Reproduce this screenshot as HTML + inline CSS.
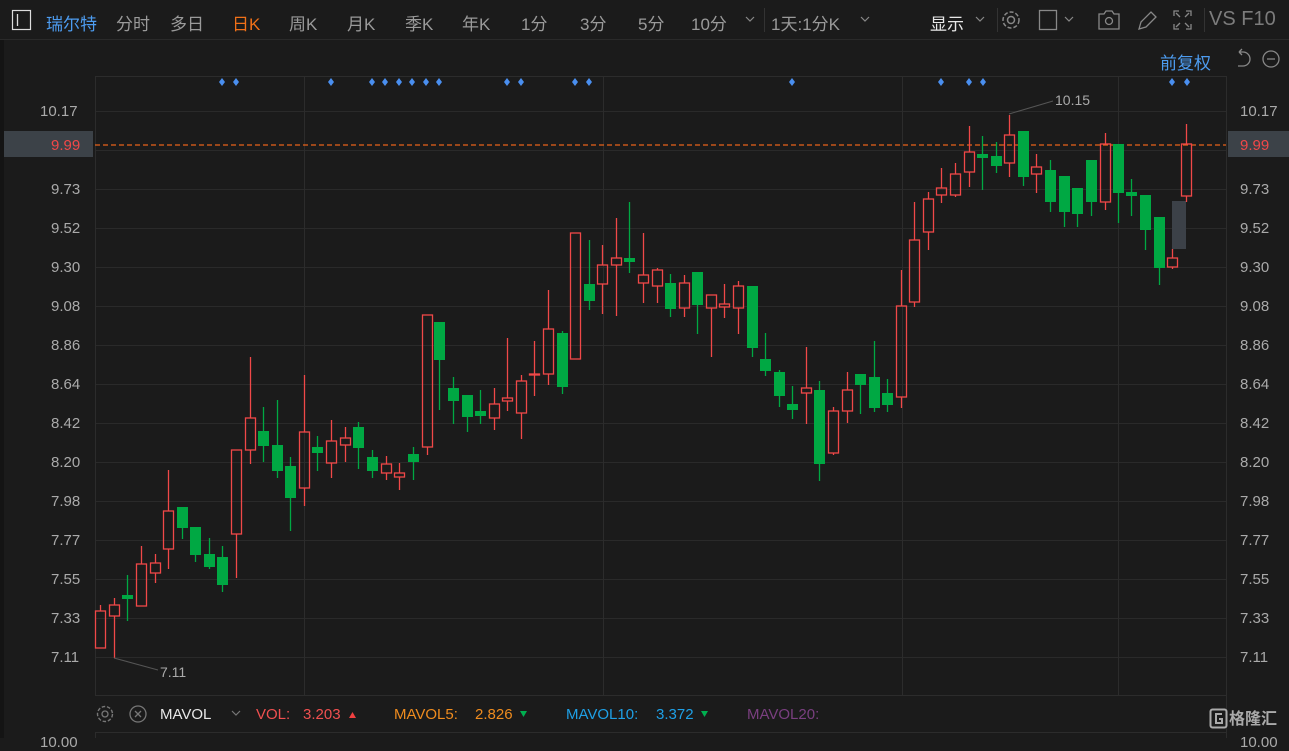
<!DOCTYPE html>
<html><head><meta charset="utf-8">
<style>
html,body{margin:0;padding:0;background:#1b1b1b;width:1289px;height:738px;overflow:hidden;font-family:"Liberation Sans","Noto Sans CJK SC",sans-serif;}
.t{position:absolute;white-space:nowrap;}
.l{font-size:15px;color:#aaa;}
</style></head><body>
<svg id="s" width="1289" height="738" style="position:absolute;left:0;top:0" xmlns="http://www.w3.org/2000/svg">
<rect x="0" y="0" width="1289" height="738" fill="#1b1b1b"/>
<rect x="0" y="40" width="4" height="698" fill="#141414"/>
<line x1="0" y1="39.5" x2="1289" y2="39.5" stroke="#2a2a2a"/>
<g id="grid" stroke="#2a2a2a" stroke-width="1"></g>
<line x1="95.5" y1="76" x2="95.5" y2="695" stroke="#2c2c2c"/>
<line x1="1226.5" y1="76" x2="1226.5" y2="738" stroke="#2c2c2c"/>
<line x1="95" y1="76.5" x2="1226" y2="76.5" stroke="#2c2c2c"/>
<line x1="95" y1="695.5" x2="1226" y2="695.5" stroke="#2c2c2c"/>
<line x1="95" y1="732.5" x2="1226" y2="732.5" stroke="#2c2c2c"/>
<line x1="95.5" y1="732" x2="95.5" y2="738" stroke="#2c2c2c"/>
<g stroke="#2c2c2c"><line x1="304.5" y1="76" x2="304.5" y2="695"/><line x1="603.5" y1="76" x2="603.5" y2="695"/><line x1="902.5" y1="76" x2="902.5" y2="695"/><line x1="1118.5" y1="76" x2="1118.5" y2="695"/></g>
<line x1="764.5" y1="8" x2="764.5" y2="32" stroke="#333"/>
<line x1="997.5" y1="8" x2="997.5" y2="32" stroke="#333"/>
<line x1="1204.5" y1="8" x2="1204.5" y2="32" stroke="#333"/>
<rect x="4" y="131" width="89" height="26" fill="#3c4248"/>
<rect x="1228" y="131" width="61" height="26" fill="#3c4248"/>
<line x1="95" y1="145" x2="1226" y2="145" stroke="#e8621a" stroke-width="1.2" stroke-dasharray="5,3"/>
<g id="c"></g>
<g id="d" fill="#4a8ff0"></g>
<line x1="114" y1="658" x2="158" y2="670" stroke="#555" stroke-width="1"/>
<line x1="1009" y1="114" x2="1053" y2="101" stroke="#555" stroke-width="1"/>
<rect x="12.5" y="10.5" width="18" height="19" fill="none" stroke="#ddd" stroke-width="1.2"/>
<line x1="17.5" y1="14" x2="17.5" y2="26" stroke="#ddd" stroke-width="1.3"/>
<path d="M746 17l4 4 4-4" fill="none" stroke="#888" stroke-width="1.2"/>
<path d="M861 17l4 4 4-4" fill="none" stroke="#888" stroke-width="1.2"/>
<path d="M976 17l4 4 4-4" fill="none" stroke="#888" stroke-width="1.2"/>
<circle cx="1011" cy="20" r="8" fill="none" stroke="#888" stroke-width="1.5" stroke-dasharray="4,2"/>
<circle cx="1011" cy="20" r="3.5" fill="none" stroke="#888" stroke-width="1.5"/>
<rect x="1039.5" y="10.5" width="17" height="19" fill="none" stroke="#888" stroke-width="1.3"/>
<path d="M1065 17l4 4 4-4" fill="none" stroke="#888" stroke-width="1.2"/>
<path d="M1099 14h5l2-3h6l2 3h5v15h-20z" fill="none" stroke="#888" stroke-width="1.3"/>
<circle cx="1109" cy="21" r="3.5" fill="none" stroke="#888" stroke-width="1.3"/>
<path d="M1139 29l2-7 10-10 5 5-10 10z" fill="none" stroke="#888" stroke-width="1.3"/>
<path d="M1174 16v-5h5M1191 16v-5h-5M1174 24v5h5M1191 24v5h-5M1176 13l4 4M1189 13l-4 4M1176 27l4-4M1189 27l-4-4" fill="none" stroke="#888" stroke-width="1.3"/>
<path d="M1239 52h4a7 7 0 0 1 0 14h-5M1239 52l3-3M1239 52l3 3" fill="none" stroke="#888" stroke-width="1.3"/>
<circle cx="1271" cy="59" r="8" fill="none" stroke="#888" stroke-width="1.3"/>
<line x1="1267" y1="59" x2="1275" y2="59" stroke="#888" stroke-width="1.3"/>
<circle cx="105" cy="714" r="7.5" fill="none" stroke="#777" stroke-width="1.4" stroke-dasharray="3.5,1.8"/>
<circle cx="105" cy="714" r="3" fill="none" stroke="#777" stroke-width="1.3"/>
<circle cx="138" cy="714" r="8" fill="none" stroke="#777" stroke-width="1.3"/>
<path d="M135 711l6 6M141 711l-6 6" stroke="#777" stroke-width="1.3"/>
<path d="M232 711l4 4 4-4" fill="none" stroke="#777" stroke-width="1.2"/>
<path d="M349 718l3.5-6 3.5 6z" fill="#f04040"/>
<path d="M520 711h7l-3.5 6z" fill="#00b050"/>
<path d="M701 711h7l-3.5 6z" fill="#00b050"/>
<rect x="1210.5" y="709.5" width="16" height="18" rx="2" fill="none" stroke="#aaa" stroke-width="2"/>
<path d="M1222 714h-6v9h6v-4h-3" fill="none" stroke="#aaa" stroke-width="2"/>
</svg>
<div class="t" style="left:46px;top:10px;font-size:17px;color:#4d9cf0">瑞尔特</div>
<div class="t" style="left:116px;top:10px;font-size:17px;color:#9a9a9a">分时</div>
<div class="t" style="left:170px;top:10px;font-size:17px;color:#9a9a9a">多日</div>
<div class="t" style="left:232px;top:10px;font-size:17px;color:#f07018">日K</div>
<div class="t" style="left:289px;top:10px;font-size:17px;color:#9a9a9a">周K</div>
<div class="t" style="left:347px;top:10px;font-size:17px;color:#9a9a9a">月K</div>
<div class="t" style="left:405px;top:10px;font-size:17px;color:#9a9a9a">季K</div>
<div class="t" style="left:462px;top:10px;font-size:17px;color:#9a9a9a">年K</div>
<div class="t" style="left:521px;top:10px;font-size:17px;color:#9a9a9a">1分</div>
<div class="t" style="left:580px;top:10px;font-size:17px;color:#9a9a9a">3分</div>
<div class="t" style="left:638px;top:10px;font-size:17px;color:#9a9a9a">5分</div>
<div class="t" style="left:691px;top:10px;font-size:17px;color:#9a9a9a">10分</div>
<div class="t" style="left:771px;top:10px;font-size:17px;color:#9a9a9a">1天:1分K</div>
<div class="t" style="left:930px;top:10px;font-size:17px;color:#e8e8e8">显示</div>
<div class="t" style="left:1209px;top:8px;font-size:20px;color:#7c7c7c">VS F10</div>
<div class="t" style="left:1160px;top:49px;font-size:17px;color:#4d9cf0">前复权</div>
<div class="t" style="left:1055px;top:92px;font-size:14px;color:#aaa">10.15</div>
<div class="t" style="left:160px;top:664px;font-size:14px;color:#aaa">7.11</div>
<div class="t" style="left:160px;top:706px;font-size:15px;color:#e8e8e8">MAVOL</div>
<div class="t" style="left:256px;top:706px;font-size:15px;color:#f05050">VOL:</div>
<div class="t" style="left:303px;top:706px;font-size:15px;color:#f05050">3.203</div>
<div class="t" style="left:394px;top:706px;font-size:15px;color:#f08c1e">MAVOL5:</div>
<div class="t" style="left:475px;top:706px;font-size:15px;color:#f08c1e">2.826</div>
<div class="t" style="left:566px;top:706px;font-size:15px;color:#1ea0e6">MAVOL10:</div>
<div class="t" style="left:656px;top:706px;font-size:15px;color:#1ea0e6">3.372</div>
<div class="t" style="left:747px;top:706px;font-size:15px;color:#7a3f80">MAVOL20:</div>
<div class="t" style="left:1229px;top:705px;font-size:16px;color:#aaa;font-weight:bold">格隆汇</div>
<div class="t l" style="left:40px;top:734px;">10.00</div>
<div class="t l" style="left:1240px;top:734px;">10.00</div>
<div class="t l" style="left:40px;top:103px;">10.17</div>
<div class="t l" style="left:1240px;top:103px;">10.17</div>
<div class="t" style="left:51px;top:137px;font-size:15px;color:#f04848">9.99</div>
<div class="t" style="left:1240px;top:137px;font-size:15px;color:#f04848">9.99</div>
<div class="t l" style="left:51px;top:181px;">9.73</div><div class="t l" style="left:1240px;top:181px;">9.73</div>
<div class="t l" style="left:51px;top:220px;">9.52</div><div class="t l" style="left:1240px;top:220px;">9.52</div>
<div class="t l" style="left:51px;top:259px;">9.30</div><div class="t l" style="left:1240px;top:259px;">9.30</div>
<div class="t l" style="left:51px;top:298px;">9.08</div><div class="t l" style="left:1240px;top:298px;">9.08</div>
<div class="t l" style="left:51px;top:337px;">8.86</div><div class="t l" style="left:1240px;top:337px;">8.86</div>
<div class="t l" style="left:51px;top:376px;">8.64</div><div class="t l" style="left:1240px;top:376px;">8.64</div>
<div class="t l" style="left:51px;top:415px;">8.42</div><div class="t l" style="left:1240px;top:415px;">8.42</div>
<div class="t l" style="left:51px;top:454px;">8.20</div><div class="t l" style="left:1240px;top:454px;">8.20</div>
<div class="t l" style="left:51px;top:493px;">7.98</div><div class="t l" style="left:1240px;top:493px;">7.98</div>
<div class="t l" style="left:51px;top:532px;">7.77</div><div class="t l" style="left:1240px;top:532px;">7.77</div>
<div class="t l" style="left:51px;top:571px;">7.55</div><div class="t l" style="left:1240px;top:571px;">7.55</div>
<div class="t l" style="left:51px;top:610px;">7.33</div><div class="t l" style="left:1240px;top:610px;">7.33</div>
<div class="t l" style="left:51px;top:649px;">7.11</div><div class="t l" style="left:1240px;top:649px;">7.11</div>
<script>
var NS="http://www.w3.org/2000/svg";
function el(p,n,a){var e=document.createElementNS(NS,n);for(var k in a)e.setAttribute(k,a[k]);p.appendChild(e);return e;}
var g=document.getElementById('grid');
[111,150,189,228,267,306,345,384,423,462,501,540,579,618,657].forEach(function(y){el(g,'line',{x1:95,x2:1226,y1:y+.5,y2:y+.5});});
var C=[
[100,'r',611,648,605,648],[114,'r',605,616,598,658],[127,'g',595,599,575,621],[141,'r',564,606,546,606],[155,'r',563,573,554,583],
[168,'r',511,549,470,569],[182,'g',507,528,507,539],[195,'g',527,555,527,562],[209,'g',554,567,538,569],[222,'g',557,585,546,592],
[236,'r',450,534,450,578],[250,'r',418,450,357,464],[263,'g',431,446,407,462],[277,'g',445,471,400,478],[290,'g',466,498,457,531],
[304,'r',432,488,375,506],[317,'g',447,453,436,471],[331,'r',441,463,420,478],[345,'r',438,445,427,462],[358,'g',427,448,422,469],
[372,'g',457,471,450,478],[386,'r',464,473,456,480],[399,'r',473,477,463,490],[413,'g',454,462,447,480],
[427,'r',315,447,315,455],[439,'g',322,360,322,410],[453,'g',388,401,377,424],[467,'g',395,417,395,432],[480,'g',411,416,390,424],
[494,'r',404,418,388,430],[507,'r',398,401,338,411],[521,'r',381,413,375,439],[534,'r',374,374.5,341,396],[548,'r',329,374,290,385],
[562,'g',333,387,331,394],[575,'r',233,359,233,359],[589,'g',284,301,240,310],[602,'r',265,284,245,314],[616,'r',258,265,218,316],
[629,'g',258,262,202,273],[643,'r',275,283,233,303],[657,'r',270,286,268,303],[670,'g',283,309,274,317],[684,'r',283,308,275,317],
[697,'g',272,305,272,334],[711,'r',295,308,295,357],[724,'r',304,307,284,318],[738,'r',286,308,281,334],
[752,'g',286,348,286,357],[765,'g',359,371,333,376],[779,'g',372,396,370,407],[792,'g',404,410,386,419],[806,'r',388,393,347,424],
[819,'g',390,464,381,481],[833,'r',411,453,407,455],[847,'r',390,411,372,423],[860,'g',374,385,374,414],[874,'g',377,408,341,412],
[887,'g',393,405,379,412],[901,'r',306,397,270,408],[914,'r',240,302,202,307],[928,'r',199,232,192,250],[941,'r',188,195,168,203],
[955,'r',174,195,163,197],[969,'r',152,172,126,187],[982,'g',154,158,136,190],[996,'g',156,166,142,173],[1009,'r',135,163,115,177],
[1023,'g',131,177,131,186],[1036,'r',167,174,154,193],[1050,'g',170,202,160,212],[1064,'g',176,212,176,227],[1077,'g',188,214,188,227],
[1091,'g',160,202,160,216],[1105,'r',144,202,133,210],[1118,'g',144,193,144,223],[1131,'g',192,196,179,216],[1145,'g',195,230,195,250],
[1159,'g',217,268,217,285],[1172,'r',258,267,249,269],[1186,'r',144,196,124,202]];
var cg=document.getElementById('c');
el(cg,'rect',{x:1172,y:201,width:14,height:48,fill:'#3c4148'});
C.forEach(function(d){var x=d[0],t=d[1],a=d[2],b=d[3],h=d[4],l=d[5];
 if(t=='r'){el(cg,'line',{x1:x+.5,x2:x+.5,y1:h,y2:a,stroke:'#f04848','stroke-width':1.3});el(cg,'line',{x1:x+.5,x2:x+.5,y1:b,y2:l,stroke:'#f04848','stroke-width':1.3});
  el(cg,'rect',{x:x-4.5,y:a,width:10,height:Math.max(b-a,1),fill:'none',stroke:'#f04848','stroke-width':1.3});}
 else{el(cg,'line',{x1:x+.5,x2:x+.5,y1:h,y2:l,stroke:'#00a843','stroke-width':1.3});el(cg,'rect',{x:x-5,y:a,width:11,height:Math.max(b-a,2),fill:'#00a843'});}
});
var dg=document.getElementById('d');
[222,236,331,372,385,399,412,426,439,507,521,575,589,792,941,969,983,1172,1187].forEach(function(x){el(dg,'path',{d:'M'+x+' 78l3 4-3 4-3-4z'});});
</script>
</body></html>
